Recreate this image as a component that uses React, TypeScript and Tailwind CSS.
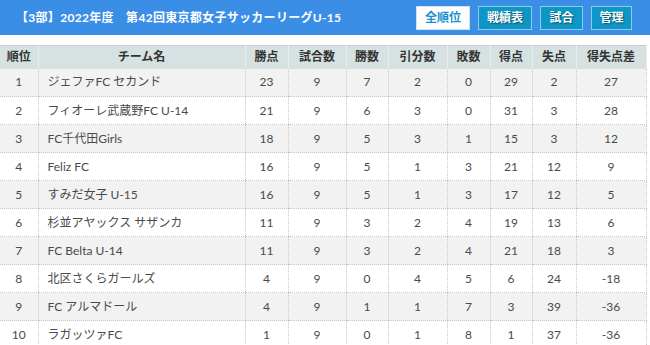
const rows: (string | number)[][] = [
  [1, "ジェファFC セカンド", 23, 9, 7, 2, 0, 29, 2, 27],
  [2, "フィオーレ武蔵野FC U-14", 21, 9, 6, 3, 0, 31, 3, 28],
  [3, "FC千代田Girls", 18, 9, 5, 3, 1, 15, 3, 12],
  [4, "Feliz FC", 16, 9, 5, 1, 3, 21, 12, 9],
  [5, "すみだ女子 U-15", 16, 9, 5, 1, 3, 17, 12, 5],
  [6, "杉並アヤックス サザンカ", 11, 9, 3, 2, 4, 19, 13, 6],
  [7, "FC Belta U-14", 11, 9, 3, 2, 4, 21, 18, 3],
  [8, "北区さくらガールズ", 4, 9, 0, 4, 5, 6, 24, -18],
  [9, "FC アルマドール", 4, 9, 1, 1, 7, 3, 39, -36],
  [10, "ラガッツァFC", 1, 9, 0, 1, 8, 1, 37, -36],
];

const heads = ["順位", "チーム名", "勝点", "試合数", "勝数", "引分数", "敗数", "得点", "失点", "得失点差"];
const widths = [38, 207, 43, 58, 42, 59, 43, 42, 44, 70];

const App = () => {
  return (
    <div
      className="w-[650px] h-[345px] overflow-hidden bg-white"
      style={{ fontFamily: "Lato, 'Noto Sans CJK JP', sans-serif" }}
    >
      <header className="h-[35px] bg-[#3a8ee6] flex items-center justify-between pl-[16px] pr-[18px]">
        <h1 className="text-white font-bold text-[12px] tracking-[0.3px]">
          【3部】2022年度　第42回東京都女子サッカーリーグU-15
        </h1>
        <nav className="flex gap-2">
          <span className="h-[24px] w-[54px] flex items-center justify-center bg-white border border-[#cfe3f5] text-[#1a8fd0] text-[12px] font-bold">
            全順位
          </span>
          {["戦績表", "試合", "管理"].map((t, i) => (
            <span
              key={t}
              className={`h-[24px] ${i === 0 ? "w-[54px]" : i === 1 ? "w-[43px]" : "w-[41px]"} flex items-center justify-center bg-[#0d96c6] border border-[#8fcbe6] text-white text-[12px] font-bold [text-shadow:1px_1px_1px_rgba(0,0,0,0.45)]`}
            >
              {t}
            </span>
          ))}
        </nav>
      </header>

      <table className="mt-[10px] w-[646px] table-fixed border-collapse text-[12px] text-[#4a4a4a]">
        <colgroup>
          {widths.map((w, i) => (
            <col key={i} style={{ width: w }} />
          ))}
        </colgroup>
        <thead>
          <tr className="h-[23px] bg-[#d6e1e1] border-t border-[#c6cfcf]">
            {heads.map((h, i) => (
              <th
                key={h}
                className={`font-bold text-[#333] text-center border-l border-[#e6ecec] ${i === 0 ? "border-l-0" : ""} ${i === 9 ? "border-r" : ""}`}
              >
                {h}
              </th>
            ))}
          </tr>
        </thead>
        <tbody>
          {rows.map((r, ri) => (
            <tr key={ri} className={`h-[28px] ${ri % 2 === 0 ? "bg-[#f2f2f2]" : "bg-white"}`}>
              {r.map((c, ci) => (
                <td
                  key={ci}
                  className={`border-b border-dotted border-[#c8c8c8] ${ci > 0 ? "border-l" : ""} ${ci === 9 ? "border-r" : ""} ${ci === 1 ? "text-left pl-[9px]" : "text-center"}`}
                >
                  {c}
                </td>
              ))}
            </tr>
          ))}
        </tbody>
      </table>
    </div>
  );
};

export default App;
